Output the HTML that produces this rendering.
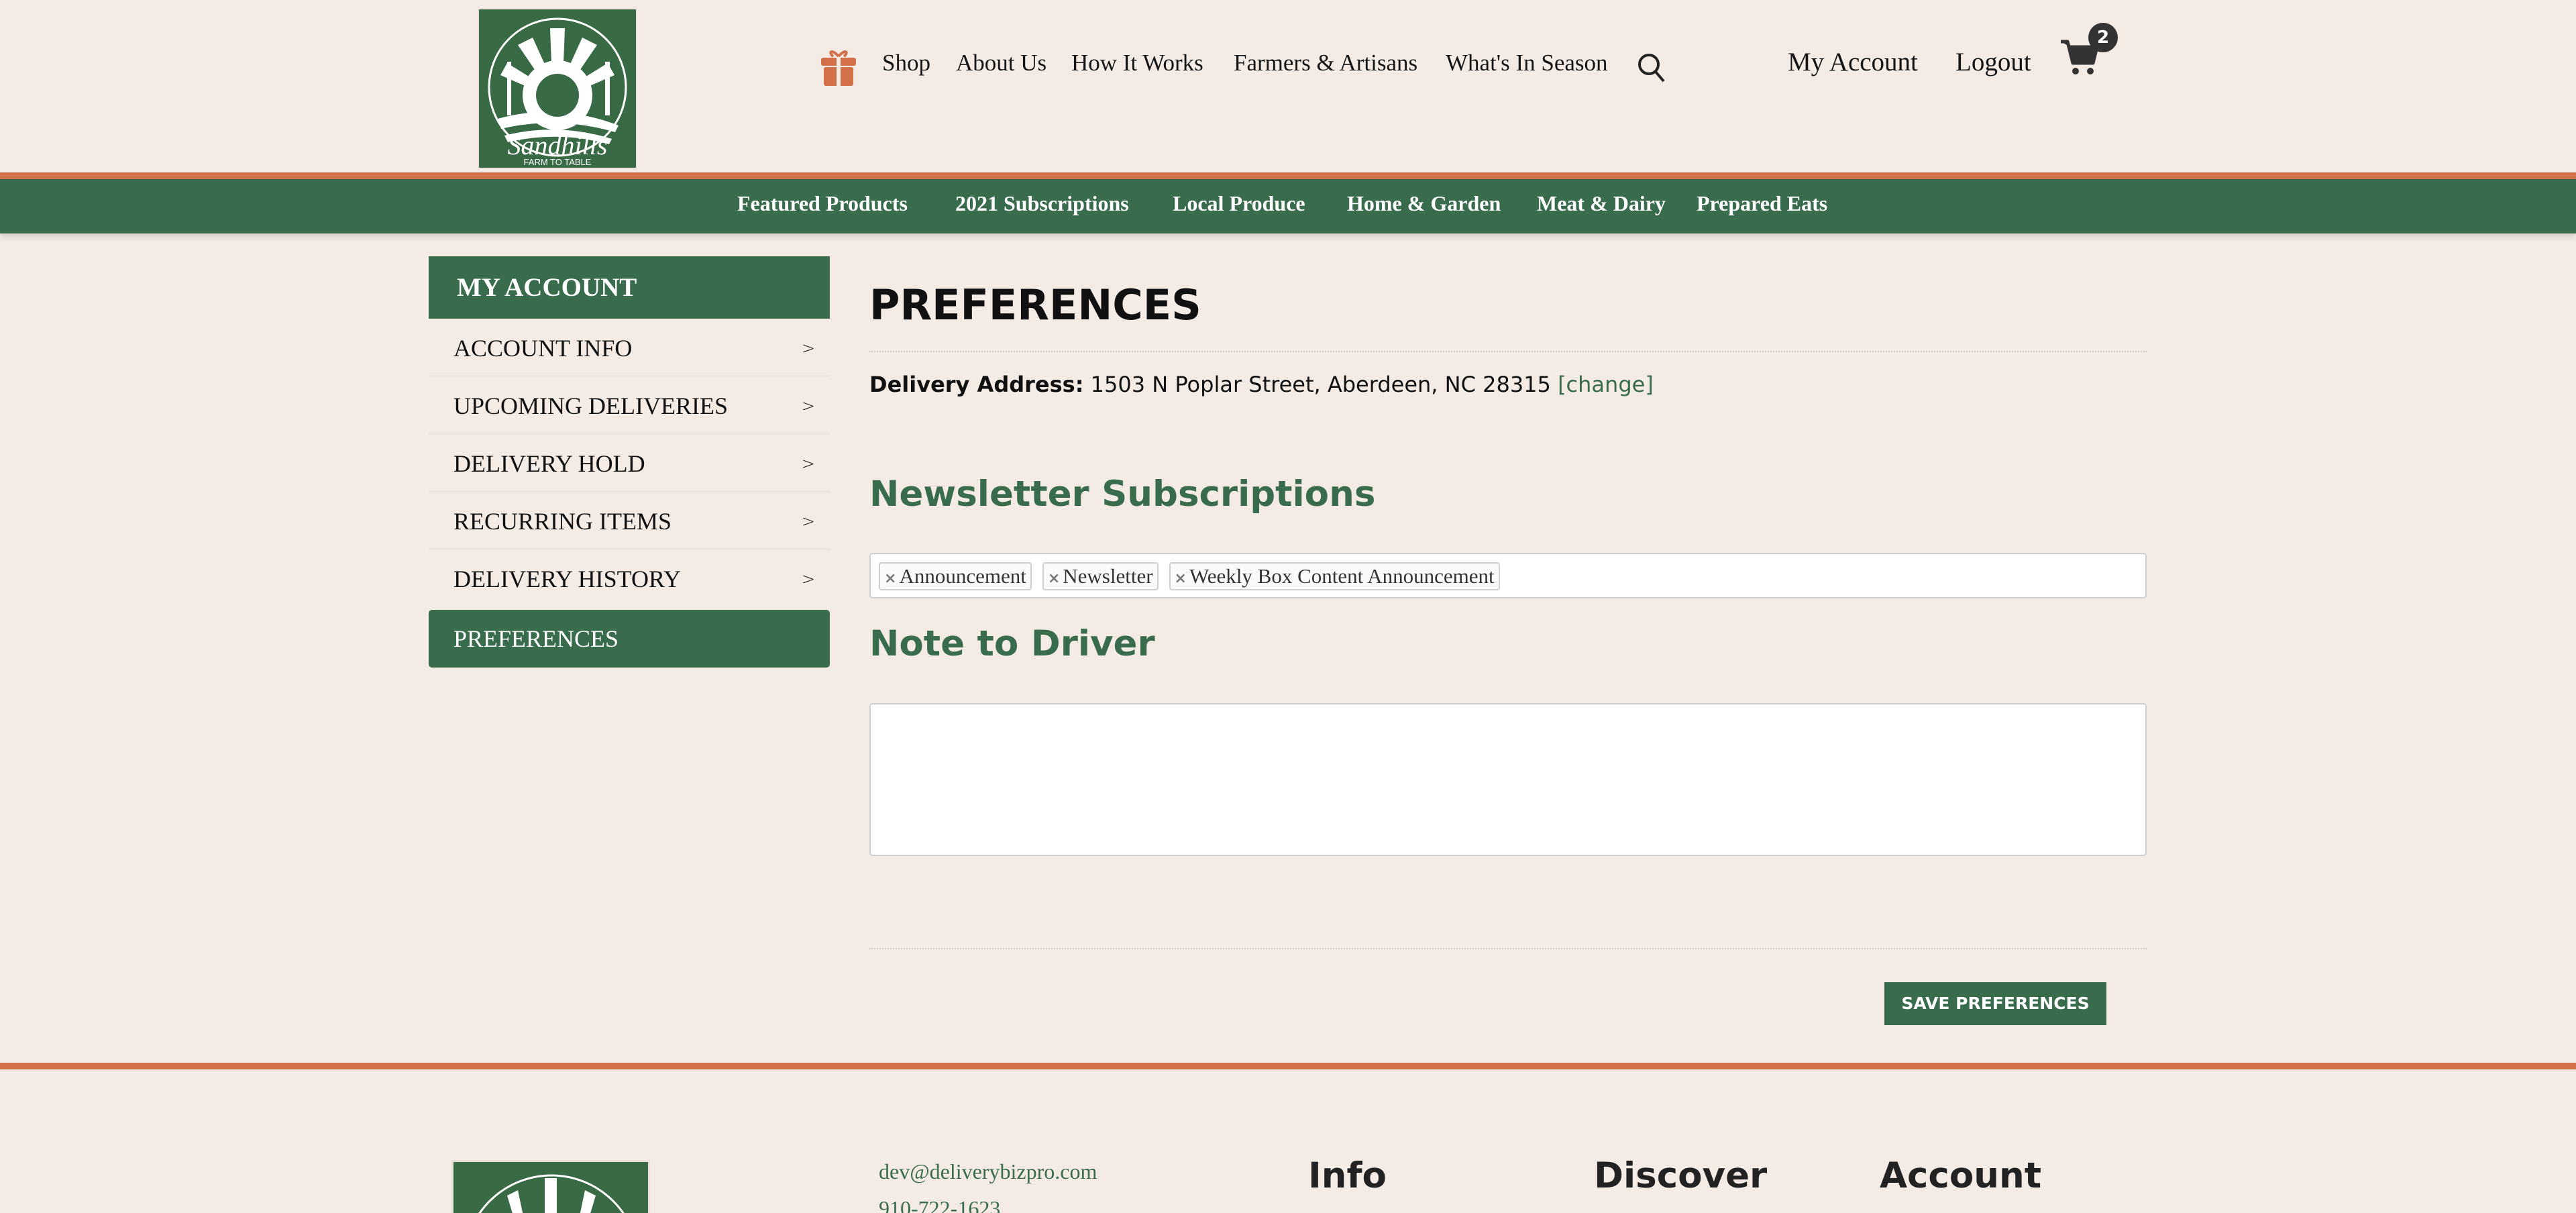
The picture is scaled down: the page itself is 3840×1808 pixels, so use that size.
<!DOCTYPE html>
<html style="overflow:hidden"><head><meta charset="utf-8"><style>
*{margin:0;padding:0;box-sizing:border-box}
body{width:3840px;height:1808px;overflow:hidden;background:#f4ece4;font-family:"Liberation Serif",serif;position:relative;color:#111}
.a{position:absolute;white-space:nowrap}
.nav{top:74px;font-size:35px;color:#161616}
.cat{top:285px;font-size:32px;font-weight:bold;color:#fff}
.side{left:639px;width:598px;height:86px;border-bottom:3px solid #ece5de;font-size:36px;padding-left:37px;line-height:86px;color:#111}
.side span{position:absolute;right:22px;top:0;font-family:"DejaVu Sans",sans-serif;font-size:24px;font-weight:200}
.h{font-family:"DejaVu Sans",sans-serif;font-weight:bold}
.tag{display:inline-block;border:2px solid #cfcfcf;border-radius:4px;background:#fafafa;font-size:31px;padding:0 6px;height:42px;line-height:38px;margin-right:16px;color:#333}
.tag b{color:#777;font-size:22px;margin-right:4px;font-family:"DejaVu Sans",sans-serif}
</style></head><body>
<svg class="a" style="left:712px;top:12px" width="238" height="240" viewBox="0 0 238 240">
<rect width="238" height="240" fill="#386a45" stroke="#e9e2da" stroke-width="4"/>
<circle cx="119" cy="118" r="102" fill="none" stroke="#fff" stroke-width="3"/>
<g fill="#fff">
<polygon points="108,30 130,30 128,82 110,82"/>
<polygon points="60,55 82,44 102,88 88,96"/>
<polygon points="178,55 156,44 136,88 150,96"/>
<polygon points="34,100 44,82 86,108 80,120"/>
<polygon points="204,100 194,82 152,108 158,120"/>
<circle cx="119" cy="130" r="52"/>
<rect x="44" y="80" width="6" height="80"/><rect x="190" y="80" width="7" height="80"/>
<path d="M30 165 Q119 140 210 175 L205 185 Q119 160 35 180Z"/>
<path d="M40 190 Q120 170 200 195 L196 203 Q120 182 45 200Z"/>
</g>
<circle cx="119" cy="130" r="32" fill="#386a45"/>
<text x="119" y="218" text-anchor="middle" fill="#fff" font-family="Liberation Serif" font-style="italic" font-size="40">Sandhills</text>
<text x="119" y="234" text-anchor="middle" fill="#fff" font-family="Liberation Sans" font-size="13">FARM TO TABLE</text>
</svg>
<svg class="a" style="left:1222px;top:70px" width="56" height="60" viewBox="0 0 56 60"><g fill="#d3704a"><rect x="2" y="16" width="52" height="12" rx="3"/><rect x="6" y="30" width="44" height="28" rx="3"/></g><rect x="25" y="14" width="6" height="46" fill="#f4ece4"/><path d="M28 14 C18 2 12 8 20 14 M28 14 C38 2 44 8 36 14" stroke="#d3704a" stroke-width="4" fill="none"/></svg>
<div class="a nav" style="left:1315px">Shop</div>
<div class="a nav" style="left:1425px">About Us</div>
<div class="a nav" style="left:1597px">How It Works</div>
<div class="a nav" style="left:1839px">Farmers &amp; Artisans</div>
<div class="a nav" style="left:2155px">What's In Season</div>
<svg class="a" style="left:2440px;top:78px" width="44" height="46" viewBox="0 0 44 46"><circle cx="18" cy="18" r="14" fill="none" stroke="#222" stroke-width="4"/><line x1="28" y1="29" x2="40" y2="43" stroke="#222" stroke-width="4"/></svg>
<div class="a nav" style="left:2665px;top:70px;font-size:39px">My Account</div>
<div class="a nav" style="left:2915px;top:70px;font-size:39px">Logout</div>
<svg class="a" style="left:3070px;top:54px" width="60" height="62" viewBox="0 0 60 62"><path d="M2 8 H12 L20 40 H50 L56 16 H16" fill="#333" stroke="#333" stroke-width="5" stroke-linejoin="round"/><circle cx="24" cy="52" r="5" fill="#333"/><circle cx="46" cy="52" r="5" fill="#333"/></svg>
<div class="a" style="left:3113px;top:34px;width:44px;height:44px;border-radius:50%;background:#333;color:#fff;font:bold 26px 'DejaVu Sans',sans-serif;text-align:center;line-height:44px">2</div>
<div class="a" style="left:0;top:257px;width:3840px;height:10px;background:#d3704a"></div>
<div class="a" style="left:0;top:267px;width:3840px;height:81px;background:#386c4c;box-shadow:0 6px 8px rgba(0,0,0,.12)"></div>
<div class="a cat" style="left:1099px">Featured Products</div>
<div class="a cat" style="left:1424px">2021 Subscriptions</div>
<div class="a cat" style="left:1748px">Local Produce</div>
<div class="a cat" style="left:2008px">Home &amp; Garden</div>
<div class="a cat" style="left:2291px">Meat &amp; Dairy</div>
<div class="a cat" style="left:2529px">Prepared Eats</div>
<div class="a" style="left:639px;top:382px;width:598px;height:93px;background:#386c4c;color:#fff;font-size:39px;font-weight:bold;padding-left:42px;line-height:93px">MY ACCOUNT</div>
<div class="a side" style="top:476px">ACCOUNT INFO<span>&gt;</span></div>
<div class="a side" style="top:562px">UPCOMING DELIVERIES<span>&gt;</span></div>
<div class="a side" style="top:648px">DELIVERY HOLD<span>&gt;</span></div>
<div class="a side" style="top:734px">RECURRING ITEMS<span>&gt;</span></div>
<div class="a side" style="top:820px;border:none">DELIVERY HISTORY<span>&gt;</span></div>
<div class="a side" style="top:909px;height:86px;background:#386c4c;color:#fff;border:none;border-radius:5px">PREFERENCES</div>
<div class="a h" style="left:1296px;top:418px;font-size:62px;color:#111">PREFERENCES</div>
<div class="a" style="left:1296px;top:523px;width:1904px;border-top:2px dotted #d0c9c2"></div>
<div class="a" style="left:1296px;top:554px;font:32px 'DejaVu Sans',sans-serif;color:#111"><b>Delivery Address:</b> 1503 N Poplar Street, Aberdeen, NC 28315 <span style="color:#386c4c">[change]</span></div>
<div class="a h" style="left:1296px;top:706px;font-size:53px;color:#386c4c">Newsletter Subscriptions</div>
<div class="a" style="left:1296px;top:824px;width:1904px;height:68px;background:#fff;border:2px solid #cfcfcf;border-radius:5px;padding:12px 0 0 12px"><span class="tag"><b>×</b>Announcement</span><span class="tag"><b>×</b>Newsletter</span><span class="tag"><b>×</b>Weekly Box Content Announcement</span></div>
<div class="a h" style="left:1296px;top:929px;font-size:53px;color:#386c4c">Note to Driver</div>
<div class="a" style="left:1296px;top:1048px;width:1904px;height:228px;background:#fff;border:2px solid #cfcfcf;border-radius:5px"></div>
<div class="a" style="left:1296px;top:1413px;width:1904px;border-top:2px dotted #d0c9c2"></div>
<div class="a" style="left:2809px;top:1464px;width:331px;height:64px;background:#386c4c;color:#fff;font:bold 25px 'DejaVu Sans',sans-serif;text-align:center;line-height:64px">SAVE PREFERENCES</div>
<div class="a" style="left:0;top:1584px;width:3840px;height:10px;background:#d3704a"></div>
<div class="a" style="left:673px;top:1729px;width:296px;height:79px;background:#386a45;border:3px solid #e9e2da;border-bottom:none;overflow:hidden"><svg width="296" height="90"><circle cx="146" cy="150" r="130" fill="none" stroke="#fff" stroke-width="3"/><rect x="136" y="24" width="18" height="70" fill="#fff"/><polygon points="80,50 96,42 106,90 92,90" fill="#fff"/><polygon points="212,50 196,42 186,90 200,90" fill="#fff"/></svg></div>
<div class="a" style="left:1310px;top:1728px;font-size:32px;color:#386c4c">dev@deliverybizpro.com</div>
<div class="a" style="left:1310px;top:1783px;font-size:32px;color:#386c4c;height:25px;overflow:hidden">910-722-1623</div>
<div class="a h" style="left:1950px;top:1722px;font-size:53px;color:#222">Info</div>
<div class="a h" style="left:2376px;top:1722px;font-size:53px;color:#222">Discover</div>
<div class="a h" style="left:2802px;top:1722px;font-size:53px;color:#222">Account</div>
</body></html>
